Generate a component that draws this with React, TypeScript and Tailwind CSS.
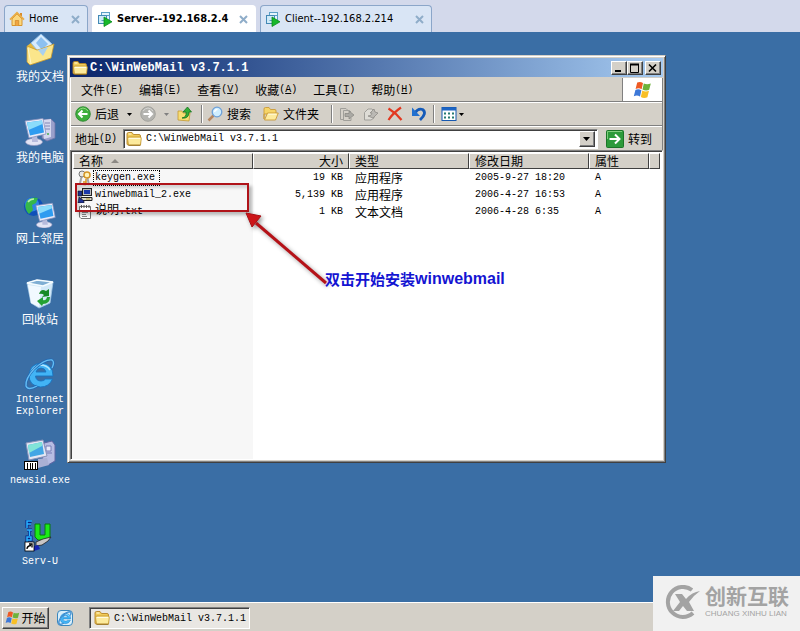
import type { ReactNode } from "react";

const CJK = "font-['Noto_Sans_CJK_SC',sans-serif]";
const MONO = "font-['Liberation_Mono','Noto_Sans_CJK_SC',monospace]";
const RAISED =
  "border border-t-white border-l-white border-r-[#404040] border-b-[#404040] bg-[#d4d0c8] shadow-[inset_-1px_-1px_0_#808080]";
const SUNKEN =
  "border border-t-[#808080] border-l-[#808080] border-r-white border-b-white shadow-[inset_1px_1px_0_#404040]";

type IconProps = { className?: string };

function FolderIcon({ className = "size-4" }: IconProps) {
  return (
    <svg viewBox="0 0 16 16" className={`shrink-0 ${className}`} aria-hidden>
      <path d="M1 13V3Q1 1.500 2.500 1.500H6L7.500 3.500H13Q14.500 3.500 14.500 5V13Q14.500 14 13.500 14H2.500Q1 14 1 13Z" fill="#f1cb58" stroke="#b58526" strokeWidth=".9" />
      <path d="M2.500 14 1.500 7.500Q1.500 6 3 6H14Q15.500 6 15.300 7.500L14.500 14Z" fill="#fcea9c" stroke="#c3952f" strokeWidth=".8" />
      <path d="M3 7.500H14M2.500 3H5.500" stroke="#fffbe0" />
      <path d="M2.500 14.300H14.500" stroke="#8a6414" strokeWidth=".8" />
    </svg>
  );
}

function OpenFolderIcon() {
  return (
    <svg viewBox="0 0 16 16" className="size-4 shrink-0" aria-hidden>
      <path d="M1 13V3Q1 1.500 2.500 1.500H6L7.500 3.500H12Q13 3.500 13 5V8H1Z" fill="#f6d568" stroke="#cb9a35" strokeWidth=".9" />
      <path d="M1.500 14 4.500 7H15.300L12.500 14Z" fill="#fdeb9e" stroke="#cb9a35" strokeWidth=".9" />
      <path d="M5.200 8.200H13.500" stroke="#fffbe0" />
    </svg>
  );
}

function WindowsFlag({ className = "size-4" }: IconProps) {
  return (
    <svg viewBox="0 0 20 20" className={`shrink-0 ${className}`} aria-hidden>
      <path d="M4.200 2.600Q7 1 10 3L8.600 9.200Q5.800 7.400 2.600 9Z" fill="#ee5a24" />
      <path d="M10.800 3.400Q14 5 17.800 3.400L16.200 9.800Q12.800 11.200 9.500 9.500Z" fill="#6db33a" />
      <path d="M2.400 9.900Q5.400 8.400 8.400 10.200L7 16.400Q4 14.600.8 16.200Z" fill="#3d78d8" />
      <path d="M9.300 10.500Q12.600 12.200 16 10.700L14.400 17.200Q11 18.800 7.800 16.900Z" fill="#f8bf26" />
    </svg>
  );
}

function VmIcon() {
  return (
    <svg viewBox="0 0 16 16" className="size-4 shrink-0" aria-hidden>
      <rect x="4.500" y="1.500" width="8" height="8" fill="#e5f5fd" stroke="#5b9fc6" />
      <rect x="1.500" y="4.500" width="8" height="8" fill="#cfeaf8" stroke="#4389b5" />
      <path d="M4.500 9.500H12.500M9.500 4.500H12" stroke="#5b9fc6" />
      <path d="M7 6V15.500L15 10.800Z" fill="#16b82b" stroke="#0a8a1b" strokeWidth=".8" />
    </svg>
  );
}

function HomeIcon() {
  return (
    <svg viewBox="0 0 16 16" className="size-4 shrink-0" aria-hidden>
      <path d="M11 2H13V5H11Z" fill="#d98c2b" />
      <path d="M3 8V14.500H13V8L8 3Z" fill="#fbd77e" stroke="#d6942f" />
      <path d="M1 8.700 8 1.800 15 8.700" fill="none" stroke="#e9ad48" strokeWidth="1.800" />
      <path d="M6.300 14.500V9.500H9.700V14.500" fill="#f0a540" stroke="#c77a22" strokeWidth=".6" />
    </svg>
  );
}

function DocumentsIcon() {
  return (
    <svg viewBox="0 0 32 32" className="size-8" aria-hidden>
      <path d="M3 12 8 8 12 9 25 7 26 24 6 31Z" fill="#e6b93d" />
      <path d="M7 9 17 0 28 10 19 23Z" fill="#d7ebfd" stroke="#92bfe8" />
      <path d="M12 9 17 3 24 10 18 16Z" fill="#8cc0f0" />
      <path d="M3 12 13 16 17 15 30 10 27 24 6 31 3 28Z" fill="#fbe68b" stroke="#c8982b" strokeWidth=".8" />
      <path d="M14 16 17 15 24 13 19 22Z" fill="#a9d0ef" />
      <path d="M4 14 7 30" stroke="#fff6c9" />
    </svg>
  );
}

function Monitor() {
  return (
    <g>
      <ellipse cx="10" cy="27" rx="8.500" ry="3.500" fill="#e3e4f4" stroke="#9296bf" strokeWidth=".7" />
      <path d="M8 21H13L14 27H8Z" fill="#b7bbdc" />
      <path d="M1 6 19 3.500 22 19 5 23Z" fill="#e9ebf8" stroke="#8790bd" strokeWidth=".8" />
      <path d="M3 7.500 18 5.500 20 17.500 6 20.500Z" fill="#2f9cf0" />
      <path d="M3 7.500 18 5.500 18.500 9 4.500 15Z" fill="#8bdcfb" />
    </g>
  );
}

function ComputerIcon() {
  return (
    <svg viewBox="0 0 32 32" className="size-8" aria-hidden>
      <path d="M18 5 27 4 31 8V23L23 26 18 23Z" fill="#9aa0cb" stroke="#7075a8" strokeWidth=".8" />
      <path d="M18 5 27 4 27 22 20 24Z" fill="#d5d8ef" />
      <path d="M21 8H26M21 11H26M21 14H26" stroke="#8086b5" />
      <circle cx="24" cy="19" r="1" fill="#46ae50" />
      <Monitor />
    </svg>
  );
}

function NetworkIcon() {
  return (
    <svg viewBox="0 0 32 32" className="size-8" aria-hidden>
      <circle cx="9.500" cy="10.500" r="9.500" fill="#0f50b8" />
      <circle cx="8" cy="8.500" r="7" fill="#2f83e6" />
      <path d="M3 5Q8 0 14 2L12 7 8 9 9 14 5 18Q-1 12 3 5Z" fill="#35b74a" />
      <path d="M4 6Q6 3 10 3" stroke="#b9efae" fill="none" strokeWidth="1.500" />
      <g transform="translate(11 4) scale(.92)">
        <Monitor />
      </g>
    </svg>
  );
}

function RecycleIcon() {
  return (
    <svg viewBox="0 0 32 32" className="size-8" aria-hidden>
      <path d="M3 6 13 3 29 5 26 26 15 31 7 26Z" fill="#d3e9f8" stroke="#a3c8e4" strokeWidth=".8" />
      <path d="M3 6 13 3 29 5 19 9Z" fill="#7faed3" stroke="#f5fcff" strokeWidth="1.500" />
      <path d="M4 8 17 10 15 30 7 26Z" fill="#f1f9ff" />
      <path d="M15 17Q17 11 22 14L25 12V19L18 20 20 18Q18 16 15 17Z" fill="#168a26" />
      <path d="M26 20Q26 27 19 27L18 29 13 24 19 20V23Q22 24 23 20Z" fill="#23a232" />
    </svg>
  );
}

function ExplorerIcon({ className = "size-8" }: IconProps) {
  return (
    <svg viewBox="0 0 32 32" className={className} aria-hidden>
      <path
        d="M29 18H11.500Q12 23 17 23 20 23 21.500 21H28.500Q25 29 16.500 29 5 28 5 17 6 6 17 5 29 6 29 18ZM22 14Q21 10 17 10 13 10 12 14Z"
        fill="#42b4f5"
        stroke="#1774c2"
        strokeWidth=".9"
        fillRule="evenodd"
      />
      <path d="M7 15Q9 8 16 7 23 7 26 12" stroke="#b1e7ff" strokeWidth="1.500" fill="none" />
      <path d="M13 28Q4 33 2 28 1 21 10 11 21 1 28 2 31 4 28 10" fill="none" stroke="#1f67b5" strokeWidth="2.600" />
      <path d="M13 28Q4 33 2 28 1 21 10 11 21 1 28 2 31 4 28 10" fill="none" stroke="#65bdf2" strokeWidth="1.400" />
    </svg>
  );
}

function NewsidIcon() {
  return (
    <svg viewBox="0 0 32 32" className="size-8" aria-hidden>
      <path d="M20 4 28 2 31 6V22L24 26H18Z" fill="#b7bce2" stroke="#6065a4" />
      <path d="M22 7H27V12H22ZM22 14H28" fill="#e7e9f8" stroke="#777cb6" />
      <path d="M2 4 19 1 23 17 5 21Z" fill="#e4e7f4" stroke="#8a93b9" />
      <path d="M4 6 18 3 20 15 6 18Z" fill="#43a6e5" />
      <path d="M4 6 18 3 18 7 5 14Z" fill="#81e4d8" />
      <path d="M14 20 23 19 25 26 14 29Z" fill="#aab0d4" />
      <rect x=".5" y="22.500" width="13" height="8" fill="#fff" stroke="#000" />
      <path d="M3.500 24V30M6.500 24V30M8.500 24V30M11.500 24V30" stroke="#000" />
    </svg>
  );
}

function ServUIcon() {
  return (
    <svg viewBox="0 0 32 32" className="size-8" aria-hidden>
      <path d="M3 8V1H8M3 4H7M3 10H8M5.500 10V16M3 23V17H7V20H3" fill="none" stroke="#071f80" strokeWidth="3" />
      <path d="M3 8V1H8M3 4H7M3 10H8M5.500 10V16M3 23V17H7V20H3" fill="none" stroke="#28b4ff" strokeWidth="1.500" />
      <path d="M11 4H16V15H21V4H26V17L23 20H14L11 17Z" fill="#1cea17" stroke="#08780c" />
      <path d="M12 22 19 19 27 17 24 21 18 25 12 26Z" fill="#c9c6c6" stroke="#222" strokeWidth=".8" />
      <path d="M10 26 14 25 16 29 10 31Z" fill="#1523b5" />
      <rect x="1" y="22" width="9" height="9" fill="#fff" stroke="#000" strokeWidth=".8" />
      <path d="M3 29Q3 26 7 25.500M5 24H8V27.500" fill="none" stroke="#000" strokeWidth="1.300" />
    </svg>
  );
}

function ArrowDisc({ forward = false }: { forward?: boolean }) {
  return (
    <svg viewBox="0 0 16 16" className="size-4 shrink-0" aria-hidden>
      <circle cx="8" cy="8" r="7.300" fill={forward ? "#b4b4b0" : "#3eae3c"} stroke={forward ? "#999994" : "#24822a"} strokeWidth=".8" />
      <path d="M3 5Q8-1 13 5" stroke={forward ? "#d7d7d3" : "#93dc82"} fill="none" />
      <path
        d={forward ? "M3.500 8H12M8.500 4.500 12 8 8.500 11.500" : "M12.500 8H4M7.500 4.500 4 8 7.500 11.500"}
        fill="none"
        stroke="#fff"
        strokeWidth="2"
      />
    </svg>
  );
}

function UpIcon() {
  return (
    <svg viewBox="0 0 16 16" className="size-4 shrink-0" aria-hidden>
      <path d="M1 14V5H5L6 7H13L12 15Z" fill="#f7dd74" stroke="#c49b32" strokeWidth=".8" />
      <path d="M5 12Q10 11 9 6H6L10.500 1 14.500 6H12Q12 13 5 12Z" fill="#33ad37" stroke="#16741c" strokeWidth=".8" />
    </svg>
  );
}

function SearchIcon() {
  return (
    <svg viewBox="0 0 16 16" className="size-4 shrink-0" aria-hidden>
      <path d="M1.500 14.500 6.500 9.500" stroke="#b78761" strokeWidth="2.500" />
      <circle cx="10" cy="6" r="4.800" fill="#cfeeff" stroke="#6ea1d8" strokeWidth="1.300" />
      <path d="M7.500 6Q8 3.500 10.500 3.500" stroke="#fff" strokeWidth="1.300" fill="none" />
    </svg>
  );
}

function MoveIcon() {
  return (
    <svg viewBox="0 0 16 16" className="size-4 shrink-0" aria-hidden>
      <path d="M1.500 2.500H7L9 4.500M1.500 2.500V13.500H4M4.500 4.500H10.500L12 6M4.500 4.500V14.500H12V12" fill="none" stroke="#a09f9a" />
      <path d="M6 7.500H10V5L15 9 10 13V10.500H6Z" fill="#aaa9a4" stroke="#85847f" strokeWidth=".7" />
    </svg>
  );
}

function CopyIcon() {
  return (
    <svg viewBox="0 0 16 16" className="size-4 shrink-0" aria-hidden>
      <path d="M1.500 6.500 5 3H9L11 5V12L8 14H1.500Z" fill="#dedcd6" stroke="#a09f9a" />
      <path d="M5 10Q9 10 9 7H7L11 3 12 6 15 7 10 12Z" fill="#bbb9b4" stroke="#8e8c87" strokeWidth=".8" />
    </svg>
  );
}

function DeleteIcon() {
  return (
    <svg viewBox="0 0 16 16" className="size-4 shrink-0" aria-hidden>
      <path d="M1.500 2.500Q9 7 14.500 14M14 1.500Q6 7 1.500 14" fill="none" stroke="#e23820" strokeWidth="2.200" />
    </svg>
  );
}

function UndoIcon() {
  return (
    <svg viewBox="0 0 16 16" className="size-4 shrink-0" aria-hidden>
      <path d="M4 7Q7 2 11.500 3.500 16.500 7 9 14" fill="none" stroke="#155bb9" strokeWidth="2.800" />
      <path d="M1 1.500V10H9Z" fill="#2170cf" />
    </svg>
  );
}

function ViewsIcon() {
  return (
    <svg viewBox="0 0 16 16" className="size-4 shrink-0" aria-hidden>
      <rect x="1" y="1.500" width="14" height="13" fill="#fff" stroke="#1658b0" />
      <path d="M1 3H15" stroke="#1d65c4" strokeWidth="3" />
      <path d="M3 7.500H13M3 11.500H13" stroke="#277b72" strokeWidth="2" strokeDasharray="2 2" />
    </svg>
  );
}

function GoIcon() {
  return (
    <svg viewBox="0 0 18 18" className="size-[18px] shrink-0" aria-hidden>
      <rect x=".5" y=".5" width="17" height="17" rx="1" fill="#2c9a3a" stroke="#1b7528" />
      <path d="M1.500 9V1.500H16" stroke="#7fcd7d" fill="none" />
      <path d="M3.500 9H13.500M9 4.500 13.500 9 9 13.500" fill="none" stroke="#fff" strokeWidth="2" />
    </svg>
  );
}

function KeyIcon() {
  return (
    <svg viewBox="0 0 16 16" className="size-4 shrink-0" aria-hidden>
      <path d="M5 5 3 13M10 6 12 15" stroke="#a8a8a8" strokeWidth="2" />
      <circle cx="5" cy="4" r="3" fill="#e8e8e8" stroke="#777" />
      <circle cx="10" cy="5" r="3" fill="#fff3ba" stroke="#d59527" strokeWidth="1.500" />
      <path d="M9 9V15M9 12H6M9 14.500H6.500" stroke="#d99420" strokeWidth="1.500" />
    </svg>
  );
}

function SetupIcon() {
  return (
    <svg viewBox="0 0 16 16" className="size-4 shrink-0" aria-hidden>
      <rect x="5.500" y="1.500" width="9" height="7" fill="#bdbdbd" stroke="#222" />
      <path d="M7 3H13V7H7Z" fill="#1d39a8" />
      <path d="M4 10.500H15V13.500H4Z" fill="#d8d4c8" stroke="#222" />
      <path d="M1 4H5V9H1ZM2 10 7 14V16H1Z" fill="#21369b" stroke="#111" strokeWidth=".6" />
      <path d="M9 12H13" stroke="#ad962c" />
    </svg>
  );
}

function TextIcon() {
  return (
    <svg viewBox="0 0 16 16" className="size-4 shrink-0" aria-hidden>
      <path d="M2.500 2.500H13.500V14.500H4L2.500 13Z" fill="#fff" stroke="#767676" />
      <path d="M4.500 1V4M7 1V4M9.500 1V4M12 1V4" stroke="#555" />
      <path d="M5 6.500H11M5 8.500H11M5 10.500H9M5 12.500H10" stroke="#8d8d8d" />
    </svg>
  );
}

function Caret({ dim = false }: { dim?: boolean }) {
  return (
    <svg viewBox="0 0 5 3" className="h-[3px] w-[5px] shrink-0" aria-hidden>
      <path d="M0 0H5L2.500 3Z" fill={dim ? "#808080" : "#000"} />
    </svg>
  );
}

type Tab = { label: string; icon: ReactNode; active?: boolean; width: string };

const tabs: Tab[] = [
  { label: "Home", icon: <HomeIcon />, width: "w-[84px]" },
  { label: "Server--192.168.2.4", icon: <VmIcon />, active: true, width: "w-[164px]" },
  { label: "Client--192.168.2.214", icon: <VmIcon />, width: "w-[172px]" },
];

function TabBar() {
  return (
    <nav className="flex h-8 shrink-0 items-end gap-1 bg-[#d3d9eb] px-1 font-['DejaVu_Sans_Condensed','DejaVu_Sans',sans-serif] text-[11px] text-black">
      {tabs.map((tab) => (
        <div
          key={tab.label}
          className={`flex h-[27px] items-center justify-between rounded-t border border-b-0 px-1 ${tab.width} ${
            tab.active ? "border-white bg-white font-bold" : "border-[#8ba6c9] bg-[#d9e5f5]"
          }`}
        >
          <button className="flex items-center gap-1 whitespace-nowrap">
            {tab.icon}
            {tab.label}
          </button>
          <button aria-label={`Close ${tab.label}`} className="px-[3px]">
            <svg viewBox="0 0 9 9" className="size-[9px]" aria-hidden>
              <path d="M1 1 8 8M8 1 1 8" stroke="#8fadc9" strokeWidth="2" />
            </svg>
          </button>
        </div>
      ))}
    </nav>
  );
}

const shortcuts = [
  { label: "我的文档", icon: <DocumentsIcon />, cjk: true },
  { label: "我的电脑", icon: <ComputerIcon />, cjk: true },
  { label: "网上邻居", icon: <NetworkIcon />, cjk: true },
  { label: "回收站", icon: <RecycleIcon />, cjk: true },
  { label: "Internet Explorer", icon: <ExplorerIcon /> },
  { label: "newsid.exe", icon: <NewsidIcon /> },
  { label: "Serv-U", icon: <ServUIcon /> },
];

function Shortcuts() {
  return (
    <ul className="w-20 pt-0.5">
      {shortcuts.map((s) => (
        <li key={s.label} className="h-[81px]">
          <button className="flex w-full flex-col items-center gap-1 px-2 text-white">
            {s.icon}
            <span className={s.cjk ? `${CJK} text-xs leading-3 whitespace-nowrap` : `${MONO} text-[10px] leading-3`}>
              {s.label}
            </span>
          </button>
        </li>
      ))}
    </ul>
  );
}

function Label({ text, hotkey }: { text: string; hotkey: string }) {
  return (
    <>
      <span className={`${CJK} text-xs leading-4`}>{text}</span>
      <span className={`${MONO} text-[10px] leading-4`}>
        (<u>{hotkey}</u>)
      </span>
    </>
  );
}

const menus = [
  ["文件", "F"],
  ["编辑", "E"],
  ["查看", "V"],
  ["收藏", "A"],
  ["工具", "T"],
  ["帮助", "H"],
];

function MenuBar() {
  return (
    <div className="flex h-6 border-b border-[#808080]">
      <div className="flex flex-1 items-center pl-0.5">
        {menus.map(([text, hotkey]) => (
          <button key={hotkey} className="flex items-center px-2">
            <Label text={text} hotkey={hotkey} />
          </button>
        ))}
      </div>
      <div className="flex w-10 items-center justify-center border-l border-[#808080] bg-white">
        <WindowsFlag className="size-5" />
      </div>
    </div>
  );
}

function Divider() {
  return <span className="h-[18px] w-0.5 border-l border-r border-l-[#808080] border-r-white" />;
}

function Toolbar() {
  return (
    <div className={`flex h-6 items-center border-t border-b border-t-white border-b-[#808080] px-1 text-xs ${CJK}`}>
      <button className="flex items-center gap-1">
        <ArrowDisc />
        后退
      </button>
      <button aria-label="后退历史" className="px-2 py-1">
        <Caret />
      </button>
      <button aria-label="前进">
        <ArrowDisc forward />
      </button>
      <button aria-label="前进历史" className="px-2 py-1">
        <Caret dim />
      </button>
      <button aria-label="向上" className="mr-2">
        <UpIcon />
      </button>
      <Divider />
      <button className="ml-1 flex items-center gap-1">
        <SearchIcon />
        搜索
      </button>
      <button className="mx-3 flex items-center gap-1">
        <OpenFolderIcon />
        文件夹
      </button>
      <Divider />
      <div className="mx-1.5 flex gap-2">
        <button aria-label="移至">
          <MoveIcon />
        </button>
        <button aria-label="复制到">
          <CopyIcon />
        </button>
        <button aria-label="删除">
          <DeleteIcon />
        </button>
        <button aria-label="撤消">
          <UndoIcon />
        </button>
      </div>
      <Divider />
      <button aria-label="查看" className="ml-1.5 flex items-center gap-0.5">
        <ViewsIcon />
        <Caret />
      </button>
    </div>
  );
}

function AddressBar() {
  return (
    <div className="flex h-6 items-center border-t border-t-white pl-1">
      <label htmlFor="address" className="flex w-12 items-center">
        <Label text="地址" hotkey="D" />
      </label>
      <div className={`flex h-5 flex-1 items-center bg-white p-0.5 ${SUNKEN}`}>
        <FolderIcon />
        <input
          id="address"
          defaultValue="C:\WinWebMail v3.7.1.1"
          className={`min-w-0 flex-1 bg-transparent pl-1 text-[10px] leading-4 outline-none ${MONO}`}
        />
        <button aria-label="地址列表" className={`flex h-4 w-4 items-center justify-center ${RAISED}`}>
          <svg viewBox="0 0 7 4" className="h-1 w-[7px]" aria-hidden>
            <path d="M0 0H7L3.500 4Z" />
          </svg>
        </button>
      </div>
      <button className={`flex items-center gap-1 pr-2.5 pl-2 text-xs ${CJK}`}>
        <GoIcon />
        转到
      </button>
    </div>
  );
}

const files = [
  { name: "keygen.exe", size: "19 KB", type: "应用程序", date: "2005-9-27 18:20", icon: <KeyIcon />, focused: true },
  { name: "winwebmail_2.exe", size: "5,139 KB", type: "应用程序", date: "2006-4-27 16:53", icon: <SetupIcon /> },
  { name: "说明.txt", size: "1 KB", type: "文本文档", date: "2006-4-28 6:35", icon: <TextIcon /> },
];

const TH =
  "border border-t-white border-l-white border-r-[#404040] border-b-[#404040] bg-[#d4d0c8] px-[5px] font-normal";

function FileList() {
  return (
    <div
      className={`relative min-h-0 flex-1 bg-[linear-gradient(to_right,#f7f7f7_182px,#ffffff_182px)] p-0.5 ${SUNKEN}`}
    >
      <table className="w-full table-fixed border-separate border-spacing-0 text-left">
        <colgroup>
          <col className="w-[180px]" />
          <col className="w-24" />
          <col className="w-[120px]" />
          <col className="w-[120px]" />
          <col className="w-[60px]" />
          <col />
        </colgroup>
        <thead className={`text-xs leading-[14px] ${CJK}`}>
          <tr>
            <th className={TH}>
              <span className="flex items-center gap-2">
                名称
                <svg viewBox="0 0 8 4" className="h-1 w-2" aria-hidden>
                  <path d="M0 4H8L4 0Z" fill="#8c8984" />
                </svg>
              </span>
            </th>
            <th className={`${TH} text-right`}>大小</th>
            <th className={TH}>类型</th>
            <th className={TH}>修改日期</th>
            <th className={TH}>属性</th>
            <th className={TH} aria-label="空" />
          </tr>
        </thead>
        <tbody className={`text-[10px] ${MONO}`}>
          {files.map((f) => (
            <tr key={f.name} className="h-[17px]">
              <td className="p-0 pl-1">
                <span className="flex h-[17px] items-center">
                  {f.icon}
                  <span
                    className={`border border-dotted px-px leading-[14px] ${f.focused ? "border-black pr-1" : "border-transparent"}`}
                  >
                    {f.name.startsWith("说明") ? (
                      <>
                        <span className="text-xs leading-[14px]">说明</span>.txt
                      </>
                    ) : (
                      f.name
                    )}
                  </span>
                </span>
              </td>
              <td className="p-0 pr-1.5 text-right">{f.size}</td>
              <td className={`p-0 pl-1.5 text-xs leading-4 ${CJK}`}>{f.type}</td>
              <td className="p-0 pl-1.5">{f.date}</td>
              <td className="p-0 pl-1.5">A</td>
              <td />
            </tr>
          ))}
        </tbody>
      </table>

      {/* Annotation drawn over the listing */}
      <div className="pointer-events-none absolute top-8 left-1 h-[29px] w-[174px] border-2 border-[#b01319] shadow-[3px_3px_3px_rgba(0,0,0,0.25),inset_3px_3px_3px_rgba(0,0,0,0.15)]" />
      <svg
        viewBox="0 0 90 80"
        className="pointer-events-none absolute top-[61px] left-[174px] h-20 w-[90px] drop-shadow-[2px_2px_2px_rgba(0,0,0,0.4)]"
        aria-hidden
      >
        <path d="M11 11 81 71" stroke="#b51218" strokeWidth="3" />
        <path d="M1 1 16 4 7 15Z" fill="#cc1518" stroke="#a80f14" />
      </svg>
      <p className="absolute top-[118px] left-[254px] flex items-center font-bold whitespace-nowrap text-[#1414d2]">
        <span className={`text-[15px] leading-5 ${CJK}`}>双击开始安装</span>
        <span className="font-['Liberation_Sans',sans-serif] text-base leading-5">winwebmail</span>
      </p>
    </div>
  );
}

function ExplorerWindow() {
  const control = `flex h-3.5 w-4 items-center justify-center ${RAISED}`;
  return (
    <section className="absolute top-[23px] right-[134px] bottom-[139px] left-[67px] flex flex-col border border-t-[#d4d0c8] border-r-[#404040] border-b-[#404040] border-l-[#d4d0c8] bg-[#d4d0c8] p-0.5 shadow-[inset_1px_1px_0_#fff,inset_-1px_-1px_0_#808080]">
      <header className="mb-px flex h-[19px] shrink-0 items-center gap-0.5 bg-linear-to-r from-[#0a246a] to-[#a6caf0] px-0.5">
        <FolderIcon />
        <h1 className={`flex-1 text-xs leading-4 font-bold text-white ${MONO}`}>C:\WinWebMail v3.7.1.1</h1>
        <div className="flex">
          <button aria-label="最小化" className={control}>
            <svg viewBox="0 0 10 10" className="size-2.5" aria-hidden>
              <path d="M1 8H7" stroke="#000" strokeWidth="2" />
            </svg>
          </button>
          <button aria-label="最大化" className={control}>
            <svg viewBox="0 0 10 10" className="size-2.5" aria-hidden>
              <path d="M.5 1.500V9.500H8.500V1.500" fill="none" stroke="#000" />
              <path d="M0 1.500H9" stroke="#000" strokeWidth="2" />
            </svg>
          </button>
        </div>
        <button aria-label="关闭" className={control}>
          <svg viewBox="0 0 10 10" className="size-2.5" aria-hidden>
            <path d="M1 1.500 8 8.500M8 1.500 1 8.500" stroke="#000" strokeWidth="1.600" />
          </svg>
        </button>
      </header>
      <div className="shrink-0 border-x border-l-white border-r-[#808080]">
        <MenuBar />
        <Toolbar />
        <AddressBar />
      </div>
      <FileList />
    </section>
  );
}

function Taskbar() {
  return (
    <footer className="flex h-[29px] shrink-0 items-center border-t border-white bg-[#d4d0c8] px-0.5 pt-0.5">
      <button className={`flex h-[22px] w-[47px] items-center justify-center text-xs ${CJK} ${RAISED}`}>
        <WindowsFlag />
        开始
      </button>
      <button aria-label="Internet Explorer" className="mx-2 rounded-sm border border-[#3b87bd] bg-[#d9effb]">
        <ExplorerIcon className="size-3.5" />
      </button>
      <button
        className={`ml-2 flex h-[22px] w-[161px] items-center gap-1 bg-[#e9e7e3] px-1 text-[10px] whitespace-nowrap ${MONO} ${SUNKEN}`}
      >
        <FolderIcon />
        C:\WinWebMail v3.7.1.1
      </button>
    </footer>
  );
}

function Watermark() {
  return (
    <aside className="absolute right-0 bottom-0 flex h-[55px] w-[147px] items-center gap-1 bg-[#f1f1f1] pb-1 pl-3 text-[#a3a3a3]">
      <svg viewBox="0 0 36 34" className="h-[34px] w-9 shrink-0" aria-hidden>
        <path d="M27 5A15 15 0 1 0 28 28" fill="none" stroke="#a3a3a3" strokeWidth="4" />
        <path d="M10 9H17L21 14Q27 7 35 6 29 10 24 17L29 26H22L18 21 14 26H8L15 17Z" fill="#a3a3a3" />
      </svg>
      <div className="whitespace-nowrap">
        <p className="font-['Liberation_Sans','Noto_Sans_CJK_SC',sans-serif] text-[21px] leading-6 font-bold">创新互联</p>
        <p className="font-['Liberation_Sans',sans-serif] text-[8px] leading-[10px]">CHUANG XINHU LIAN</p>
      </div>
    </aside>
  );
}

export default function App() {
  return (
    <div className="relative flex min-h-screen flex-col overflow-hidden bg-[#3a6ea5] text-black">
      <TabBar />
      <main className="relative flex-1">
        <Shortcuts />
        <ExplorerWindow />
      </main>
      <Taskbar />
      <Watermark />
    </div>
  );
}
